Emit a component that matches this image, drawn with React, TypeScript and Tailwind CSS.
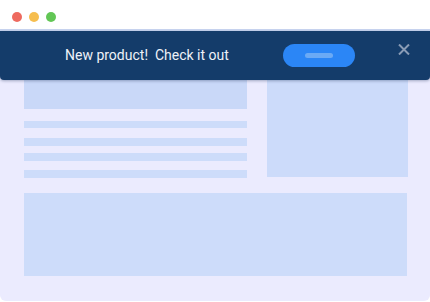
import React from "react";

export default function App() {
  return (
    <div className="w-[430px] h-[302px] bg-white" style={{ fontFamily: "Roboto, 'Noto Sans', sans-serif" }}>
      <div className="w-[430px] h-[301px] flex flex-col">
        <div className="h-[29px] flex items-start gap-[7px] pl-[12px] pt-[12px] bg-white">
          <span className="w-[10px] h-[10px] rounded-full bg-[#EE6A5F]" />
          <span className="w-[10px] h-[10px] rounded-full bg-[#F6BE4F]" />
          <span className="w-[10px] h-[10px] rounded-full bg-[#62C655]" />
        </div>
        <div className="relative flex-1 bg-[#EBEBFE] rounded-b-[6px] border-t-2 border-[#C9D5F0] px-[22px] pl-[24px] pt-[20px] pb-[25px] flex flex-col">
          <div className="flex gap-[20px]">
            <div className="w-[223px] flex flex-col">
              <div className="h-[58px] bg-[#C9D8F8]" />
              <div className="h-[7px] mt-[12px] bg-[#CDDCFA]" />
              <div className="h-[8px] mt-[10px] bg-[#CDDCFA]" />
              <div className="h-[8px] mt-[7px] bg-[#CDDCFA]" />
              <div className="h-[8px] mt-[9px] bg-[#CDDCFA]" />
            </div>
            <div className="w-[141px] h-[126px] bg-[#CCDBFA]" />
          </div>
          <div className="mt-[15px] w-[383px] flex-1 bg-[#CDDCFA]" />
          <div className="absolute left-0 right-0 top-0 h-[49px] bg-[#143C6A] rounded-b-[4px] shadow-[0_1px_3px_rgba(20,40,80,0.35)] flex items-center">
            <span className="ml-[65px] w-[163px] text-[14px] text-[#EEF2F8] whitespace-pre">New product!  Check it out</span>
            <div className="ml-[55px] w-[72px] h-[23px] rounded-full bg-[#2B86F6] flex items-center justify-center">
              <div className="w-[28px] h-[5px] rounded-full bg-[#6BAAF5]" />
            </div>
            <svg className="ml-[43px] -mt-[13px]" width="12" height="11" viewBox="0 0 12 11">
              <path d="M1 0.5 L11 10.5 M11 0.5 L1 10.5" stroke="#8A9CB6" strokeWidth="2" />
            </svg>
          </div>
        </div>
      </div>
    </div>
  );
}
